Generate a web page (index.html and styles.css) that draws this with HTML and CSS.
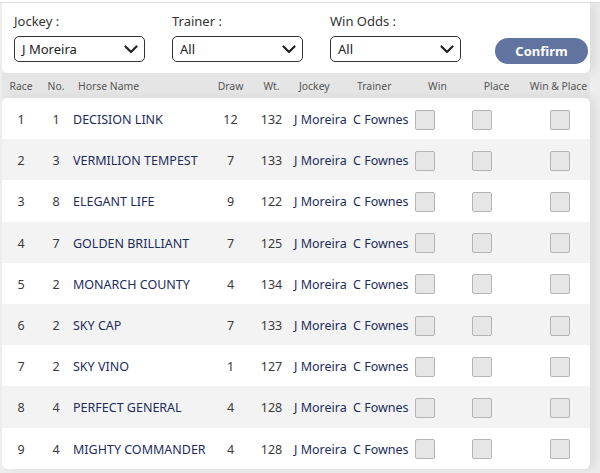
FILE: index.html
```html
<!DOCTYPE html>
<html lang="en">
<head>
  <meta charset="UTF-8" />
  <meta name="viewport" content="width=device-width, initial-scale=1.0"/>
  <title>Race Selection</title>
  <link rel="stylesheet" href="styles.css">
</head>
<body>

  <div class="page">

    <!-- FILTERS -->
    <div class="filters">
      <div class="filter">
        <label>Jockey :</label>
        <div class="select">
          <span>J Moreira</span>
          <svg width="14" height="9" viewBox="0 0 14 9"><path d="M1.5 1.5 L7 7 L12.5 1.5" fill="none" stroke="#222" stroke-width="2.2" stroke-linecap="round" stroke-linejoin="round"/></svg>
        </div>
      </div>
      <div class="filter">
        <label>Trainer :</label>
        <div class="select">
          <span>All</span>
          <svg width="14" height="9" viewBox="0 0 14 9"><path d="M1.5 1.5 L7 7 L12.5 1.5" fill="none" stroke="#222" stroke-width="2.2" stroke-linecap="round" stroke-linejoin="round"/></svg>
        </div>
      </div>
      <div class="filter">
        <label>Win Odds :</label>
        <div class="select">
          <span>All</span>
          <svg width="14" height="9" viewBox="0 0 14 9"><path d="M1.5 1.5 L7 7 L12.5 1.5" fill="none" stroke="#222" stroke-width="2.2" stroke-linecap="round" stroke-linejoin="round"/></svg>
        </div>
      </div>
      <button class="confirm">Confirm</button>
    </div>

    <!-- TABLE HEAD -->
    <div class="row head">
      <div class="c">Race</div>
      <div class="c">No.</div>
      <div class="hn">Horse Name</div>
      <div class="c">Draw</div>
      <div class="c">Wt.</div>
      <div class="jk">Jockey</div>
      <div class="tr">Trainer</div>
      <div class="c">Win</div>
      <div class="c">Place</div>
      <div class="c">Win &amp; Place</div>
    </div>

    <!-- TABLE BODY -->
    <div class="rows" id="rows"></div>

  </div>

  <script>
    const runners = [
      [1, 1, "DECISION LINK", 12, 132],
      [2, 3, "VERMILION TEMPEST", 7, 133],
      [3, 8, "ELEGANT LIFE", 9, 122],
      [4, 7, "GOLDEN BRILLIANT", 7, 125],
      [5, 2, "MONARCH COUNTY", 4, 134],
      [6, 2, "SKY CAP", 7, 133],
      [7, 2, "SKY VINO", 1, 127],
      [8, 4, "PERFECT GENERAL", 4, 128],
      [9, 4, "MIGHTY COMMANDER", 4, 128]
    ];

    const rows = document.getElementById("rows");
    runners.forEach(r => {
      const row = document.createElement("div");
      row.classList.add("row");
      row.innerHTML = `
        <div class="c num">${r[0]}</div>
        <div class="c num">${r[1]}</div>
        <div class="name horse">${r[2]}</div>
        <div class="c num">${r[3]}</div>
        <div class="c num">${r[4]}</div>
        <div class="name jockey">J Moreira</div>
        <div class="name trainer">C Fownes</div>
        <div class="box win"><span></span></div>
        <div class="box place"><span></span></div>
        <div class="box both"><span></span></div>
      `;
      rows.appendChild(row);
    });
  </script>

</body>
</html>
```

FILE: styles.css
```css
/* RESET & BASE */
* {
  box-sizing: border-box;
  margin: 0;
  padding: 0;
}

body {
  font-family: "Noto Sans", "Open Sans", Arial, sans-serif;
  background: #fff;
  color: #333;
}

.page {
  margin-top: 2px;
  border-top: 1px solid #dcdcdc;
  background: #ededed;
  height: 471px;
  padding-left: 2px;
  overflow: hidden;
}

/* FILTERS */
.filters {
  background: #fff;
  width: 588px;
  height: 70px;
  border-radius: 0 0 6px 6px;
  display: flex;
  align-items: flex-start;
  padding: 10px 0 0 12px;
  gap: 27px;
  box-shadow: 6px 0 10px rgba(0, 0, 0, 0.07);
}

.filter label {
  display: block;
  font-size: 13px;
  color: #333;
  height: 23px;
  line-height: 17px;
}

.select {
  width: 131px;
  height: 26px;
  border: 1px solid #333;
  border-radius: 5px;
  display: flex;
  align-items: center;
  justify-content: space-between;
  padding: 0 6px 0 7px;
  font-size: 13px;
  color: #222;
}

.confirm {
  margin: 25px 0 0 7px;
  width: 93px;
  height: 26px;
  border: none;
  border-radius: 13px;
  background: #61749f;
  color: #fff;
  font-family: inherit;
  font-size: 13px;
  font-weight: bold;
}

/* TABLE */
.row {
  display: grid;
  grid-template-columns: 38px 32px 134px 49px 33px 60px 61px 57px 61px 63px;
  align-items: center;
  width: 588px;
  height: 41.2px;
  font-size: 12.5px;
}

.row .c {
  text-align: center;
}

.row.head {
  height: 25px;
  background: #e5e5e5;
  font-size: 10.4px;
  color: #555;
}

.row.head .hn {
  padding-left: 6px;
}

.row.head .jk {
  padding-left: 11px;
}

.row.head .tr {
  padding-left: 9px;
}

.rows {
  width: 588px;
  background: #fff;
  border-radius: 6px;
  overflow: hidden;
  box-shadow: 6px 0 10px rgba(0, 0, 0, 0.07);
}

.rows .row {
  padding-top: 2px;
}

.rows .row:nth-child(even) {
  background: #f3f3f3;
}

.num {
  color: #3a3a3a;
}

.name {
  color: #1d2c5c;
  white-space: nowrap;
}

.horse {
  padding-left: 1px;
}

.jockey {
  padding-left: 6px;
}

.trainer {
  padding-left: 5px;
}

.box span {
  display: block;
  width: 20px;
  height: 20px;
  background: #e6e6e6;
  border: 1px solid #b4b4b4;
  border-radius: 2px;
}

.box.win span {
  margin-left: 6px;
}

.box.place span {
  margin-left: 6px;
}

.box.both span {
  margin-left: 23px;
}
```
